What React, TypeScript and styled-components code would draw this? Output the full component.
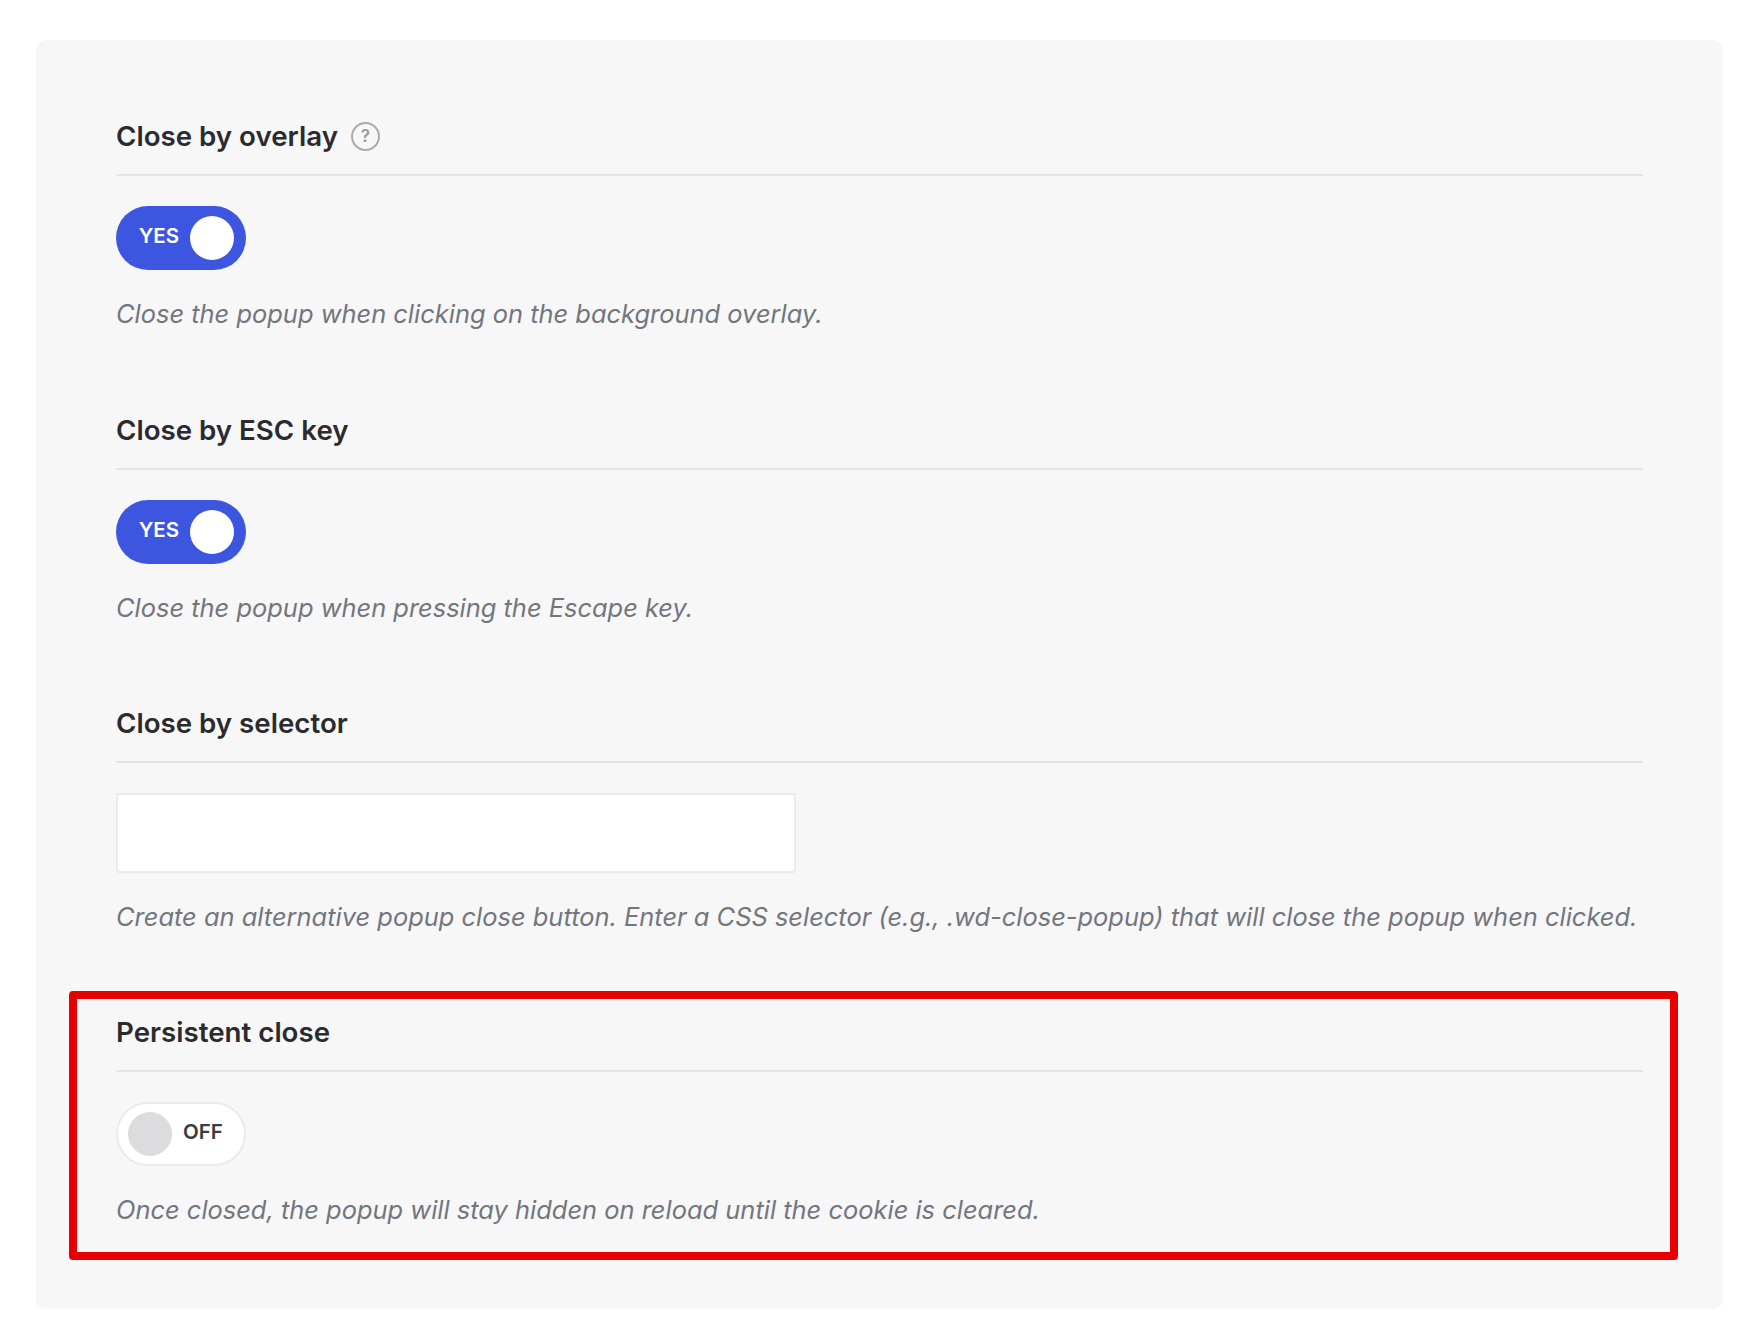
import React from "react";
import styled, { createGlobalStyle } from "styled-components";

const GlobalStyle = createGlobalStyle`
  body {
    margin: 0;
    background: #ffffff;
    font-family: "Inter", "Liberation Sans", sans-serif;
  }
`;

const Page = styled.div`
  width: 1758px;
  height: 1344px;
  padding: 40px 35px 0 36px;
  box-sizing: border-box;
`;

const Panel = styled.div`
  height: 1269px;
  box-sizing: border-box;
  padding: 76px 80px 0;
  background: #f7f7f8;
  border-radius: 10px;
`;

const Section = styled.section`
  margin-bottom: 78px;
  &:nth-child(2) {
    margin-bottom: 77px;
  }
`;

const Highlight = styled.section`
  margin: -22px -35px 0 -47px;
  padding: 13px 27px 0 39px;
  height: 269px;
  box-sizing: border-box;
  border: 8px solid #e60000;
  border-radius: 4px;
`;

const Heading = styled.div`
  display: flex;
  align-items: center;
  gap: 13px;
  height: 40px;
  padding-bottom: 18px;
  border-bottom: 2px solid #e4e4e6;
  font-size: 27.7px;
  font-weight: 600;
  color: #2b2b2e;
`;

const HelpIcon = styled.span`
  display: flex;
  align-items: center;
  justify-content: center;
  width: 29px;
  height: 29px;
  box-sizing: border-box;
  border: 2px solid #ababad;
  border-radius: 50%;
  font-size: 17px;
  font-weight: 600;
  color: #9a9a9d;
`;

const Toggle = styled.div<{ $on: boolean }>`
  display: flex;
  flex-direction: ${(p) => (p.$on ? "row" : "row-reverse")};
  align-items: center;
  justify-content: flex-end;
  gap: 11px;
  width: 130px;
  height: 64px;
  margin-top: 30px;
  padding: 0 ${(p) => (p.$on ? "12px" : "10px")};
  box-sizing: border-box;
  border-radius: 32px;
  background: ${(p) => (p.$on ? "#3d56e0" : "#ffffff")};
  border: ${(p) => (p.$on ? "none" : "2px solid #ebebed")};
`;

const ToggleLabel = styled.span<{ $on: boolean }>`
  margin-bottom: 5px;
  font-size: 20.5px;
  font-weight: 600;
  color: ${(p) => (p.$on ? "#ffffff" : "#3a3d42")};
`;

const Knob = styled.span<{ $on: boolean }>`
  flex: none;
  width: 44px;
  height: 44px;
  border-radius: 50%;
  background: ${(p) => (p.$on ? "#ffffff" : "#dcdcde")};
`;

const TextInput = styled.input`
  display: block;
  width: 680px;
  height: 80px;
  margin-top: 30px;
  box-sizing: border-box;
  background: #ffffff;
  border: 2px solid #ebebed;
  border-radius: 3px;
  outline: none;
`;

const Description = styled.p`
  margin: 26px 0 0;
  font-size: 25.45px;
  line-height: 36px;
  font-style: italic;
  color: #72767d;
  white-space: nowrap;
`;

function Switch({ on }: { on: boolean }) {
  return (
    <Toggle $on={on}>
      <ToggleLabel $on={on}>{on ? "YES" : "OFF"}</ToggleLabel>
      <Knob $on={on} />
    </Toggle>
  );
}

export default function App() {
  return (
    <Page>
      <GlobalStyle />
      <Panel>
        <Section>
          <Heading>
            Close by overlay
            <HelpIcon>?</HelpIcon>
          </Heading>
          <Switch on />
          <Description>
            Close the popup when clicking on the background overlay.
          </Description>
        </Section>
        <Section>
          <Heading>Close by ESC key</Heading>
          <Switch on />
          <Description>Close the popup when pressing the Escape key.</Description>
        </Section>
        <Section>
          <Heading>Close by selector</Heading>
          <TextInput type="text" />
          <Description>
            Create an alternative popup close button. Enter a CSS selector
            (e.g., .wd-close-popup) that will close the popup when clicked.
          </Description>
        </Section>
        <Highlight>
          <Heading>Persistent close</Heading>
          <Switch on={false} />
          <Description>
            Once closed, the popup will stay hidden on reload until the cookie
            is cleared.
          </Description>
        </Highlight>
      </Panel>
    </Page>
  );
}
